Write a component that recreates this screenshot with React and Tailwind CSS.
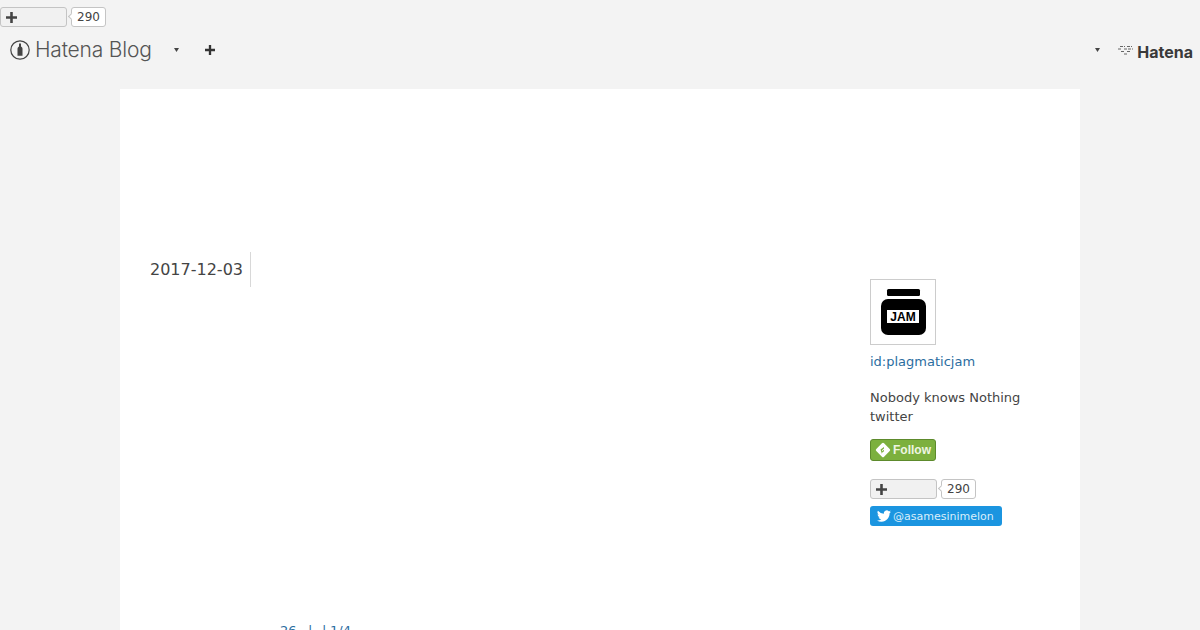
import React from "react";

const sans = "font-['DejaVu_Sans','Liberation_Sans',sans-serif]";

function Plus({ size = 12, color = "#444" }) {
  return (
    <svg width={size} height={size} viewBox="0 0 12 12" className="block">
      <path d="M4.6 0h2.8v4.6H12v2.8H7.4V12H4.6V7.4H0V4.6h4.6z" fill={color} />
    </svg>
  );
}

function Caret() {
  return (
    <svg width="5" height="4" viewBox="0 0 5 4" className="block">
      <path d="M0 0h5L2.5 4z" fill="#444" />
    </svg>
  );
}

function StarButton({ width }) {
  return (
    <div className="flex items-center h-[20px]">
      <div
        className="h-[20px] box-border border border-[#c4c4c4] rounded-[3px] bg-[#f1f1f1] flex items-center pl-[5px]"
        style={{ width }}
      >
        <Plus size={11} />
      </div>
      <div className="relative ml-[4px] h-[20px] box-border border border-[#c4c4c4] rounded-[3px] bg-white flex items-center px-[5px] text-[12px] text-[#444]">
        <span className="absolute left-[-3px] top-[6px] w-[5px] h-[5px] bg-white border-l border-b border-[#c4c4c4] rotate-45" />
        290
      </div>
    </div>
  );
}

export default function App() {
  return (
    <div className={`w-[1200px] h-[630px] overflow-hidden bg-[#f3f3f3] ${sans}`}>
      <div className="pt-[7px] h-[33px] box-border">
        <StarButton width={67} />
      </div>

      <div className="h-[33px] flex items-center justify-between pl-[10px] pr-[7px]">
        <div className="flex items-center">
          <svg width="20" height="20" viewBox="0 0 20 20" className="block">
            <circle cx="10" cy="10" r="9.2" fill="none" stroke="#444" strokeWidth="1.2" />
            <path d="M9 3.6h2v2.8c1 .6 1.5 1.4 1.5 2.4v7h-5v-7c0-1 .5-1.8 1.5-2.4z" fill="#444" />
          </svg>
          <span className="ml-[5px] font-['Inter',sans-serif] font-light text-[21px] leading-none text-[#555] tracking-[-0.2px] w-[118px] whitespace-nowrap">
            Hatena Blog
          </span>
          <span className="ml-[21px]">
            <Caret />
          </span>
          <span className="ml-[26px]">
            <Plus size={10} color="#333" />
          </span>
        </div>
        <div className="flex items-center">
          <Caret />
          <svg width="16" height="12" viewBox="0 0 16 12" className="block ml-[18px] mr-[3px]">
            <path
              d="M2 2.5h5M9 2.5h5M0 5h4M6 5h9M3 7.5h4M9 7.5h3M6 10h3"
              stroke="#666"
              strokeWidth="1"
              strokeDasharray="3 1"
              fill="none"
            />
          </svg>
          <span className="font-['Inter',sans-serif] font-bold text-[16px] leading-none text-[#3a3a3a] mt-[5px] whitespace-nowrap">
            Hatena
          </span>
        </div>
      </div>

      <div className="mt-[23px] ml-[120px] w-[960px] h-[541px] bg-white flex">
        <div className="w-[750px] pt-[163px] pl-[30px] shrink-0 flex flex-col">
          <div className="flex h-[35px]">
            <div className="w-[101px] box-border border-r border-[#d8d8d8] text-[16px] text-[#444] leading-[35px] whitespace-nowrap">
              2017-12-03
            </div>
          </div>
          <div className="mt-[334px] ml-[130px] flex text-[13px] leading-[19px] text-[#2b6d9f] whitespace-nowrap">
            <span className="w-[28px]">26</span>
            <span className="w-[14px]">|</span>
            <span className="w-[8px]">|</span>
            <span>1/4</span>
          </div>
        </div>

        <div className="pt-[190px] w-[180px] flex flex-col items-start">
          <div className="w-[66px] h-[66px] box-border border border-[#cccccc] bg-white flex items-center justify-center">
            <svg width="46" height="46" viewBox="0 0 46 46" className="block">
              <rect x="7" y="0" width="33" height="7" rx="1.5" fill="#000" />
              <rect x="1" y="10" width="45" height="36" rx="7" fill="#000" />
              <rect x="7" y="21" width="32" height="13" fill="#fff" />
              <text
                x="23"
                y="32"
                textAnchor="middle"
                fontFamily="'Liberation Sans', sans-serif"
                fontWeight="700"
                fontSize="12"
                fill="#000"
              >
                JAM
              </text>
            </svg>
          </div>
          <div className="mt-[7px] text-[13px] leading-[19px] text-[#2b6d9f] whitespace-nowrap">
            id:plagmaticjam
          </div>
          <div className="mt-[17px] text-[13px] leading-[19px] text-[#444] whitespace-nowrap">
            Nobody knows Nothing
            <br />
            twitter
          </div>
          <div className="mt-[13px] w-[66px] h-[22px] box-border border border-[#5d8a2c] rounded-[3px] bg-[#7cb03e] flex items-center pl-[4px]">
            <svg width="16" height="16" viewBox="0 0 16 16" className="block shrink-0">
              <rect x="2.5" y="2.5" width="11" height="11" rx="1.5" transform="rotate(45 8 8)" fill="#fff" />
              <path d="M5.5 7.5l3.5-2.6v1.7L7 8.2v1l2-1.5v1.6l-2 1.5v1.2z" fill="#7cb03e" />
            </svg>
            <span className="ml-[2px] font-['Liberation_Sans',sans-serif] font-bold text-[12px] leading-none text-[#eef5e2] whitespace-nowrap">
              Follow
            </span>
          </div>
          <div className="mt-[18px]">
            <StarButton width={67} />
          </div>
          <div className="mt-[7px] w-[132px] h-[20px] rounded-[3px] bg-[#1b95e0] flex items-center pl-[6px]">
            <svg width="16" height="14" viewBox="0 0 24 24" className="block shrink-0">
              <path
                d="M23.95 4.57a10 10 0 0 1-2.82.77 4.96 4.96 0 0 0 2.16-2.72 9.9 9.9 0 0 1-3.12 1.19 4.92 4.92 0 0 0-8.38 4.48A13.98 13.98 0 0 1 1.64 3.16a4.92 4.92 0 0 0 1.52 6.57 4.9 4.9 0 0 1-2.23-.61v.06a4.92 4.92 0 0 0 3.95 4.83 5 5 0 0 1-2.21.08 4.94 4.94 0 0 0 4.6 3.42A9.87 9.87 0 0 1 0 19.54a14 14 0 0 0 7.56 2.21c9.05 0 14-7.5 14-13.98 0-.21 0-.42-.02-.63a9.9 9.9 0 0 0 2.41-2.55z"
                fill="#fff"
              />
            </svg>
            <span className="ml-[1px] text-[11px] leading-none text-[#d9eefb] whitespace-nowrap">@asamesinimelon</span>
          </div>
        </div>
      </div>
    </div>
  );
}
